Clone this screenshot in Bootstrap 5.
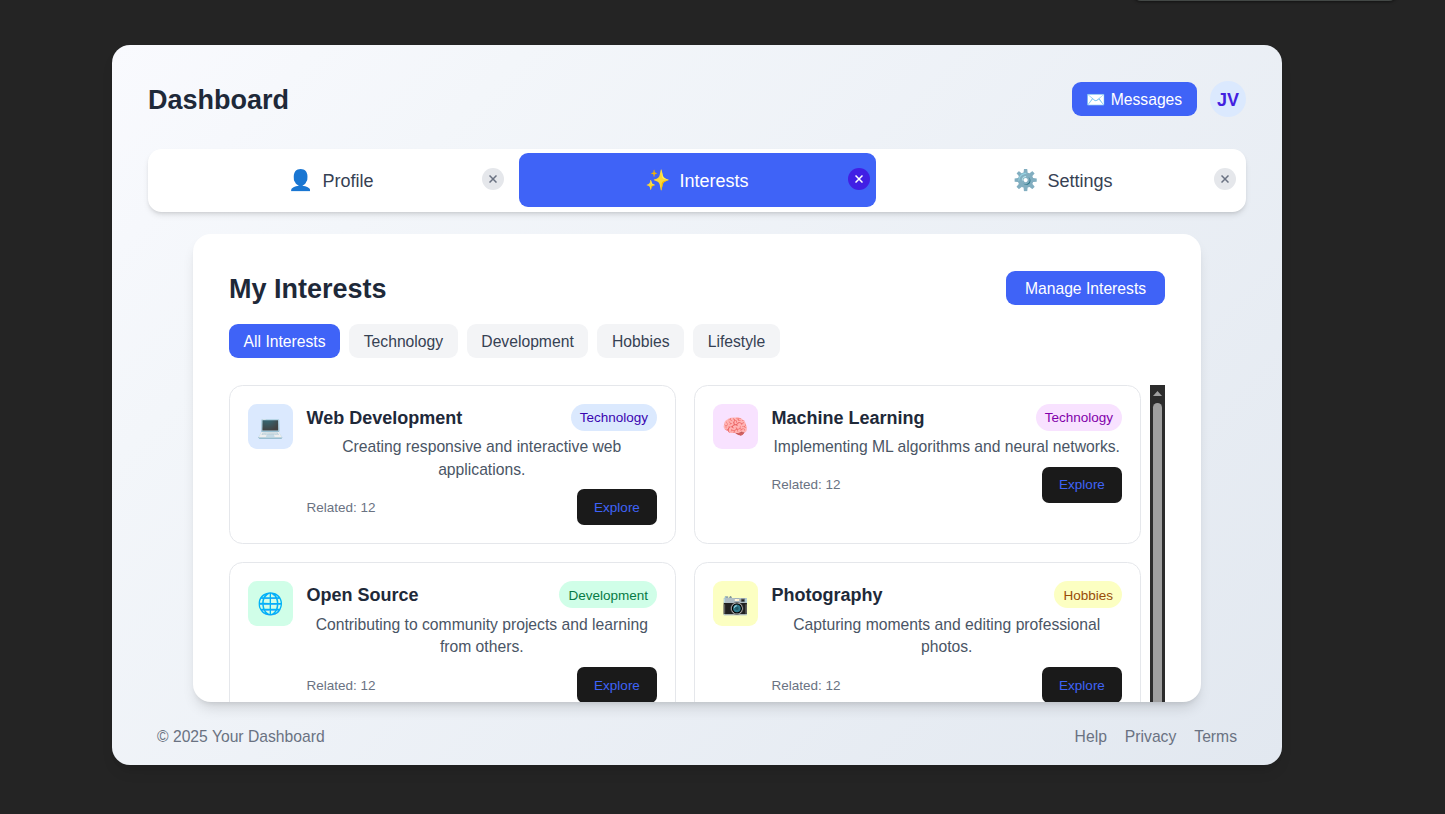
<!DOCTYPE html>
<html lang="en">
<head>
<meta charset="utf-8">
<meta name="viewport" content="width=device-width, initial-scale=1">
<title>Dashboard</title>
<link href="https://cdn.jsdelivr.net/npm/bootstrap@5.3.0/dist/css/bootstrap.min.css" rel="stylesheet">
<style>
html{font-size:18px}
body{background:#242424;font-family:"Liberation Sans","Noto Color Emoji",sans-serif;font-size:15.7px;line-height:22.5px;height:814px;overflow:hidden;color:#1e2939}
.shell{width:1170px;height:720px;margin:45px 0 0 112px;padding:36px 36px 0;border-radius:18px;background:linear-gradient(135deg,#f9fafe 0%,#f3f6fa 22%,#e2e8f0 100%);box-shadow:0 9px 14px -3px rgba(0,0,0,.1),0 4px 6px -4px rgba(0,0,0,.1)}
.top-toast{left:1133px;top:-20px;width:264px;height:21px;border-radius:8px;border-bottom:1px solid #434846;box-shadow:0 1px 3px rgba(0,0,0,.5)}
h1,h2{font-size:27px;font-weight:700;line-height:38px;height:36px;margin:0}
.solid-btn{background:#3f63f7;color:#fff;border:0;border-radius:9px;height:34px;padding:2px 0 0;font-size:15.7px;line-height:22.5px;display:flex;align-items:center;justify-content:center}
.solid-btn.manage{padding-top:3px}
.solid-btn:hover{background:#3153e4;color:#fff}
.avatar{width:36px;height:36px;padding-top:2px;background:#dbe9fe;color:#431fe0;font-weight:700;font-size:18px}
.tabs{margin-top:32px;height:62.5px;padding:4px 4.5px;gap:9px;border-radius:13.5px;background:#fff;box-shadow:0 4px 6px -1px rgba(0,0,0,.1),0 2px 4px -2px rgba(0,0,0,.15)}
.tab-item{flex:1 1 0;height:54px;font-size:18px;color:#364153;border-radius:9px;gap:9px}
.tab-item.active{background:#3f63f7;color:#fff}
.tab-emoji{font-size:20.25px;line-height:27px;padding-top:1px}
.tab-label{padding-top:3px}
.tab-close{right:5.5px;top:15px;width:22px;height:22px;border-radius:50%;background:#e5e7eb;color:#6a7282}
.active .tab-close{background:#411fe4;color:#fff}
.panel{width:1008px;height:468px;margin:22px auto 0;padding:36px 36px 0;border-radius:18px;background:#fff;box-shadow:0 9px 14px -3px rgba(0,0,0,.12),0 4px 6px -4px rgba(0,0,0,.14)}
.filters{gap:9px;margin-top:18px}
.filter{height:34px;border-radius:9px;background:#f3f4f6;color:#364153;padding:3px 14.6px 0;border:0;white-space:nowrap}
.filter.active{background:#3f63f7;color:#fff}
.scroller{height:317px;margin-top:27px}
.tiles{display:grid;grid-template-columns:447px 447px;gap:18px;align-content:start;width:912px}
.tile{height:159px;border:1px solid #e5e7eb;border-radius:13.5px;padding:18px;gap:13.5px}
.tile-icon{width:45px;height:45px;padding-top:2px;border-radius:9px;font-size:21.3px;line-height:27px}
.tile h3{font-size:18px;font-weight:700;line-height:29px;height:27px;margin:0}
.pill{border-radius:14px;height:27px;padding:0 9px;font-size:13.5px;line-height:27px}
.tile p{margin:5.5px 0 8px;line-height:22.5px;text-align:center;color:#4a5565}
.related{font-size:13.5px;color:#6a7282;padding-top:2px}
.explore{width:80px;height:36px;padding:2px 0 0;border:0;border-radius:7px;background:#1a1a1a;color:#3f63f7;font-size:13.5px}
.second{height:160px}
.second .pill{line-height:29px}
.second p{margin:6px 0 8.5px}
.bar{width:15px;background:#2c2c2c;padding:0 3px}
.bar svg{display:block;height:18px}
.thumb{border-radius:5px 5px 0 0;background:#9f9f9f}
footer{padding:24px 9px 0;color:#6a7282}
footer a{color:#6a7282;text-decoration:none}
.c-blue{background:#dbe9fe;color:#3a05b0}
.c-violet{background:#f8e2ff;color:#8200aa}
.c-green{background:#d0fee8;color:#067a45}
.c-yellow{background:#fcffc2;color:#984c08}
</style>
</head>
<body>
<div class="top-toast position-absolute"></div>
<main class="shell">
  <header class="d-flex justify-content-between align-items-center">
    <h1>Dashboard</h1>
    <div class="d-flex align-items-center" style="gap:13px">
      <button class="btn solid-btn" style="width:125px">✉️ Messages</button>
      <div class="avatar rounded-circle d-flex align-items-center justify-content-center">JV</div>
    </div>
  </header>
  <nav class="tabs d-flex">
    <div class="tab-item position-relative d-flex align-items-center justify-content-center"><span class="tab-emoji">👤</span><span class="tab-label">Profile</span>
      <span class="tab-close position-absolute d-flex align-items-center justify-content-center"><svg width="8" height="8" viewBox="0 0 8 8" stroke="currentColor" stroke-width="1.5"><path d="M.5.5l7 7M7.5.5l-7 7"/></svg></span></div>
    <div class="tab-item active position-relative d-flex align-items-center justify-content-center"><span class="tab-emoji">✨</span><span class="tab-label">Interests</span>
      <span class="tab-close position-absolute d-flex align-items-center justify-content-center"><svg width="8" height="8" viewBox="0 0 8 8" stroke="currentColor" stroke-width="1.5"><path d="M.5.5l7 7M7.5.5l-7 7"/></svg></span></div>
    <div class="tab-item position-relative d-flex align-items-center justify-content-center"><span class="tab-emoji">⚙️</span><span class="tab-label">Settings</span>
      <span class="tab-close position-absolute d-flex align-items-center justify-content-center"><svg width="8" height="8" viewBox="0 0 8 8" stroke="currentColor" stroke-width="1.5"><path d="M.5.5l7 7M7.5.5l-7 7"/></svg></span></div>
  </nav>
  <section class="panel overflow-hidden">
    <div class="d-flex justify-content-between align-items-center">
      <h2>My Interests</h2>
      <button class="btn solid-btn manage" style="width:159px">Manage Interests</button>
    </div>
    <div class="filters d-flex">
      <button class="filter active">All Interests</button><button class="filter">Technology</button><button class="filter">Development</button><button class="filter">Hobbies</button><button class="filter">Lifestyle</button>
    </div>
    <div class="scroller d-flex justify-content-between overflow-hidden">
      <div class="tiles">
        <article class="tile d-flex">
          <div class="tile-icon c-blue flex-shrink-0 d-flex align-items-center justify-content-center">💻</div>
          <div class="flex-grow-1">
            <div class="d-flex justify-content-between"><h3>Web Development</h3><span class="pill c-blue">Technology</span></div>
            <p>Creating responsive and interactive web applications.</p>
            <div class="d-flex justify-content-between align-items-center"><span class="related">Related: 12</span><button class="explore">Explore</button></div>
          </div>
        </article>
        <article class="tile d-flex">
          <div class="tile-icon c-violet flex-shrink-0 d-flex align-items-center justify-content-center">🧠</div>
          <div class="flex-grow-1">
            <div class="d-flex justify-content-between"><h3>Machine Learning</h3><span class="pill c-violet">Technology</span></div>
            <p>Implementing ML algorithms and neural networks.</p>
            <div class="d-flex justify-content-between align-items-center"><span class="related">Related: 12</span><button class="explore">Explore</button></div>
          </div>
        </article>
        <article class="tile second d-flex">
          <div class="tile-icon c-green flex-shrink-0 d-flex align-items-center justify-content-center">🌐</div>
          <div class="flex-grow-1">
            <div class="d-flex justify-content-between"><h3>Open Source</h3><span class="pill c-green">Development</span></div>
            <p>Contributing to community projects and learning from others.</p>
            <div class="d-flex justify-content-between align-items-center"><span class="related">Related: 12</span><button class="explore">Explore</button></div>
          </div>
        </article>
        <article class="tile second d-flex">
          <div class="tile-icon c-yellow flex-shrink-0 d-flex align-items-center justify-content-center">📷</div>
          <div class="flex-grow-1">
            <div class="d-flex justify-content-between"><h3>Photography</h3><span class="pill c-yellow">Hobbies</span></div>
            <p>Capturing moments and editing professional photos.</p>
            <div class="d-flex justify-content-between align-items-center"><span class="related">Related: 12</span><button class="explore">Explore</button></div>
          </div>
        </article>
      </div>
      <div class="bar d-flex flex-column">
        <svg width="9" height="18" viewBox="0 0 9 18"><path d="M0 11L4.5 6 9 11z" fill="#a0a0a0"/></svg>
        <div class="thumb flex-grow-1"></div>
      </div>
    </div>
  </section>
  <footer class="d-flex justify-content-between">
    <span>© 2025 Your Dashboard</span>
    <div class="d-flex" style="gap:18px"><a href="#">Help</a><a href="#">Privacy</a><a href="#">Terms</a></div>
  </footer>
</main>
<script src="https://cdn.jsdelivr.net/npm/bootstrap@5.3.0/dist/js/bootstrap.bundle.min.js"></script>
</body>
</html>
